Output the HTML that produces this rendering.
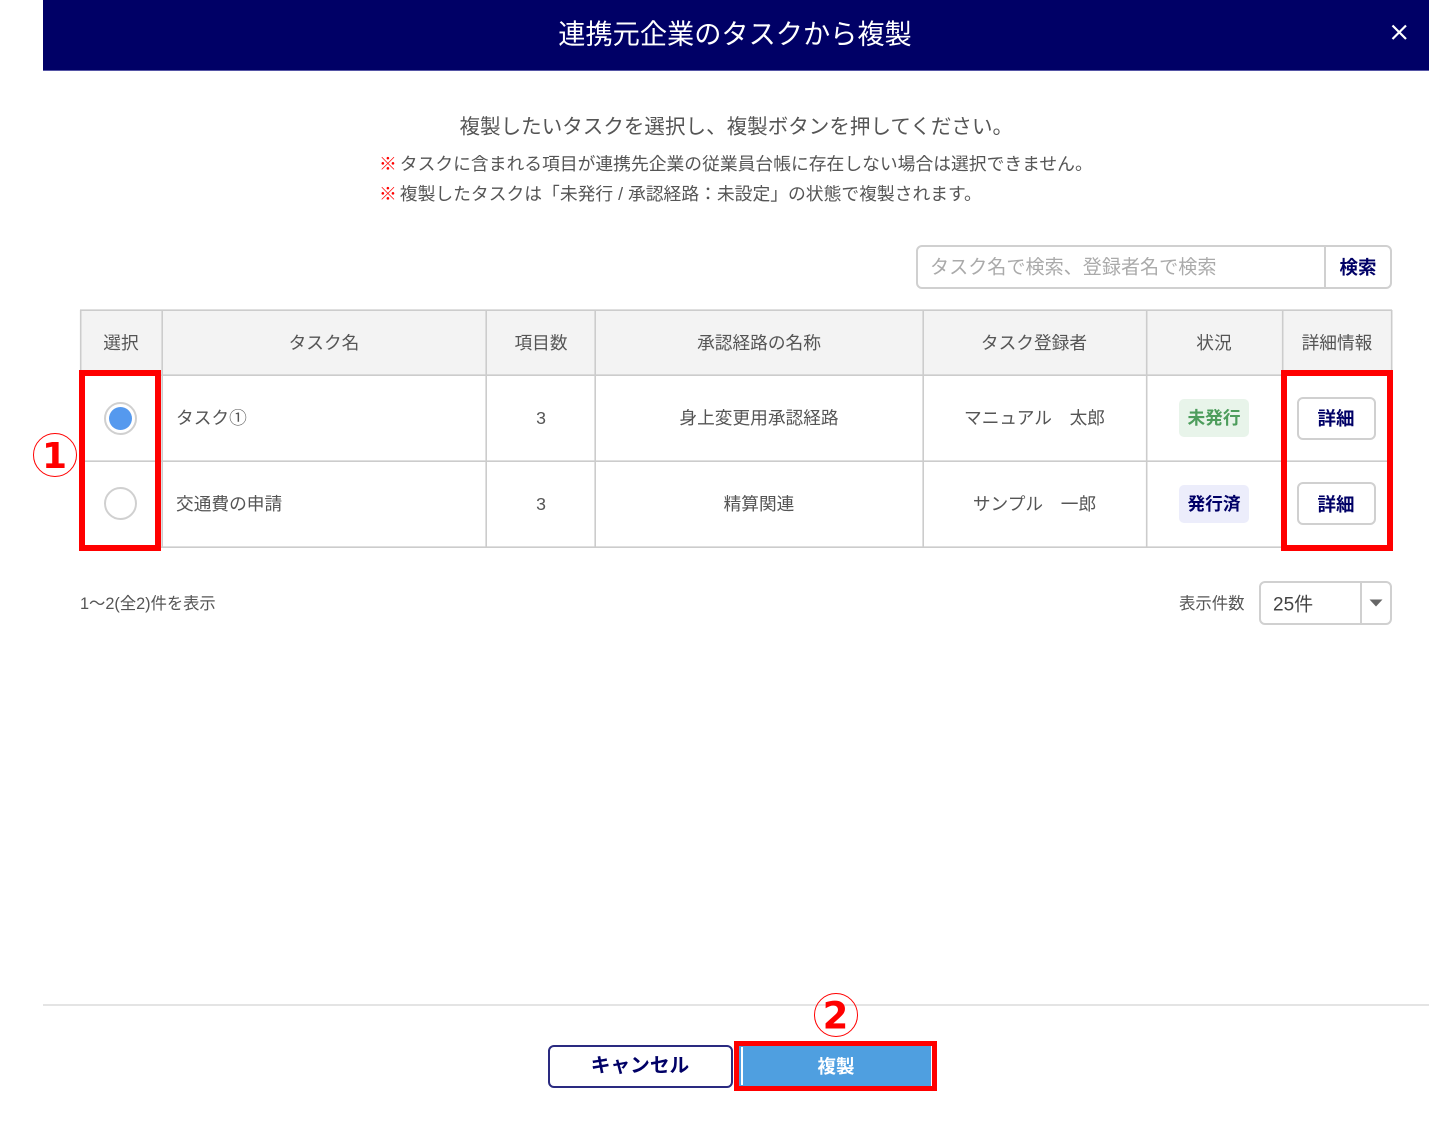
<!DOCTYPE html>
<html lang="ja"><head><meta charset="utf-8"><title>連携元企業のタスクから複製</title>
<style>
html,body{margin:0;padding:0;background:#fff}
body{width:1429px;height:1125px;overflow:hidden;font-family:"Liberation Sans","Noto Sans CJK JP",sans-serif;color:#555}
#w{position:relative;width:1429px;height:1125px;overflow:hidden;background:#fff;filter:blur(.35px)}
.a{position:absolute;box-sizing:border-box}
.t{position:absolute;white-space:nowrap;line-height:1;transform:translate(-50%,-50%);font-size:17.7px;color:#555;margin-top:1.5px}
.l{transform:translate(0,-50%)}
.b{font-weight:700}
.hl{background:#ccc}
.n{font-family:"DejaVu Sans",sans-serif;font-weight:700;color:#f00;margin-top:0}
.x{color:#f00;font-weight:700;margin-right:3px}
</style></head><body><div id="w">
<div class="a" style="left:43px;top:0;width:1386px;height:71px;background:#000066;border-bottom:1px solid #5555a5"></div>
<span class="t" style="left:735px;top:34px;font-size:27.2px;color:#fff;margin-top:0">連携元企業のタスクから複製</span>
<svg class="a" style="left:1389px;top:22px" width="21" height="21" viewBox="0 0 21 21"><path d="M3.5 3.5L17 17M17 3.5L3.5 17" stroke="#fff" stroke-width="2.2" fill="none"/></svg>

<span class="t l" style="left:459.5px;top:126.5px;font-size:20.55px">複製したいタスクを選択し、複製ボタンを押してください。</span>
<span class="t l" style="left:379px;top:163.5px;font-size:17.8px"><span class="x">※</span>タスクに含まれる項目が連携先企業の従業員台帳に存在しない場合は選択できません。</span>
<span class="t l" style="left:379px;top:193.5px;font-size:17.8px"><span class="x">※</span>複製したタスクは「未発行 / 承認経路：未設定」の状態で複製されます。</span>

<div class="a" style="left:916px;top:245px;width:476px;height:44px;border:2px solid #d0d0d0;border-radius:6px"></div>
<div class="a" style="left:1324px;top:245px;width:2px;height:44px;background:#d0d0d0"></div>
<span class="t l" style="left:930px;top:266px;font-size:19.1px;color:#aaa">タスク名で検索、登録者名で検索</span>
<span class="t b" style="left:1358px;top:266px;font-size:18.5px;color:#000066">検索</span>

<!-- table -->
<div class="a" style="left:80px;top:310px;width:1312px;height:65px;background:#f3f3f3"></div>
<svg class="a" style="left:0;top:0" width="1429" height="600" viewBox="0 0 1429 600">
<path d="M80 310.2H1392M80 375.2H1392M80 461.2H1392M80 547.2H1392M80.7 310V548M162.2 310V548M486.2 310V548M595.2 310V548M923.2 310V548M1146.7 310V548M1282.7 310V548M1391.7 310V548" stroke="#ccc" stroke-width="1.6" fill="none"/>
</svg>

<span class="t" style="left:121px;top:342px">選択</span>
<span class="t" style="left:324px;top:342px">タスク名</span>
<span class="t" style="left:541px;top:342px">項目数</span>
<span class="t" style="left:759px;top:342px">承認経路の名称</span>
<span class="t" style="left:1034px;top:342px">タスク登録者</span>
<span class="t" style="left:1214px;top:342px">状況</span>
<span class="t" style="left:1337px;top:342px">詳細情報</span>

<!-- row 1 -->
<div class="a" style="left:104px;top:401.5px;width:33px;height:33px;border-radius:50%;border:2px solid #d0d0d0"></div>
<div class="a" style="left:109px;top:406.5px;width:23px;height:23px;border-radius:50%;background:#5599ee"></div>
<span class="t l" style="left:176px;top:417.5px">タスク①</span>
<span class="t" style="left:541px;top:417.5px">3</span>
<span class="t" style="left:759px;top:417.5px">身上変更用承認経路</span>
<span class="t" style="left:1034.5px;top:417.5px">マニュアル　太郎</span>
<div class="a" style="left:1179px;top:399px;width:70px;height:38px;border-radius:5px;background:#e8f4ea"></div>
<span class="t b" style="left:1214px;top:417.5px;color:#4d9d5c">未発行</span>
<div class="a" style="left:1297px;top:397px;width:79px;height:43px;border:2px solid #d0d0d0;border-radius:6px;background:#fff"></div>
<span class="t b" style="left:1336px;top:417.5px;font-size:18.5px;color:#000066">詳細</span>

<!-- row 2 -->
<div class="a" style="left:104px;top:487px;width:33px;height:33px;border-radius:50%;border:2px solid #d0d0d0"></div>
<span class="t l" style="left:176px;top:503px">交通費の申請</span>
<span class="t" style="left:541px;top:503px">3</span>
<span class="t" style="left:759px;top:503px">精算関連</span>
<span class="t" style="left:1034.5px;top:503px">サンプル　一郎</span>
<div class="a" style="left:1179px;top:485px;width:70px;height:38px;border-radius:5px;background:#ecedfb"></div>
<span class="t b" style="left:1214px;top:503px;color:#000066">発行済</span>
<div class="a" style="left:1297px;top:482px;width:79px;height:43px;border:2px solid #d0d0d0;border-radius:6px;background:#fff"></div>
<span class="t b" style="left:1336px;top:503px;font-size:18.5px;color:#000066">詳細</span>

<!-- highlights -->
<div class="a" style="left:79px;top:370px;width:82px;height:181px;border:6px solid #f00"></div>
<div class="a" style="left:1281px;top:370px;width:112px;height:181px;border:6px solid #f00"></div>
<div class="a" style="left:33px;top:433px;width:44px;height:44px;border:1.5px solid #f00;border-radius:50%"></div>
<span class="t n" style="left:54.5px;top:457px;font-size:36px">1</span>

<!-- footer of table -->
<span class="t l" style="left:80px;top:602px;font-size:16.3px">1～2(全2)件を表示</span>
<span class="t l" style="left:1179px;top:602px;font-size:16.4px">表示件数</span>
<div class="a" style="left:1259px;top:581px;width:133px;height:44px;border:2px solid #d0d0d0;border-radius:6px"></div>
<div class="a" style="left:1360px;top:581px;width:2px;height:44px;background:#d0d0d0"></div>
<span class="t l" style="left:1273px;top:603px;font-size:19px;color:#444">25件</span>
<svg class="a" style="left:1369px;top:599px" width="14" height="8" viewBox="0 0 14 8"><path d="M0.5 0.5H13.5L7 7.5Z" fill="#666"/></svg>

<!-- bottom -->
<div class="a" style="left:43px;top:1004px;width:1386px;height:1.5px;background:#e4e4e4"></div>
<div class="a" style="left:548px;top:1045px;width:185px;height:43px;border:2px solid #2a2a80;border-radius:6px;background:#fff"></div>
<span class="t b" style="left:640px;top:1065px;font-size:19.7px;color:#000066">キャンセル</span>
<div class="a" style="left:739px;top:1046px;width:192px;height:40px;background:#4f9fe0"></div>
<div class="a" style="left:734px;top:1041px;width:203px;height:50px;border:5.5px solid #f00"></div>
<div class="a" style="left:741px;top:1047px;width:2px;height:38px;background:#fff"></div>
<span class="t b" style="left:836px;top:1065px;font-size:18.5px;color:#fff">複製</span>
<div class="a" style="left:814px;top:993px;width:44px;height:44px;border:1.5px solid #f00;border-radius:50%"></div>
<span class="t n" style="left:835.5px;top:1016px;font-size:37px">2</span>
</div></body></html>
